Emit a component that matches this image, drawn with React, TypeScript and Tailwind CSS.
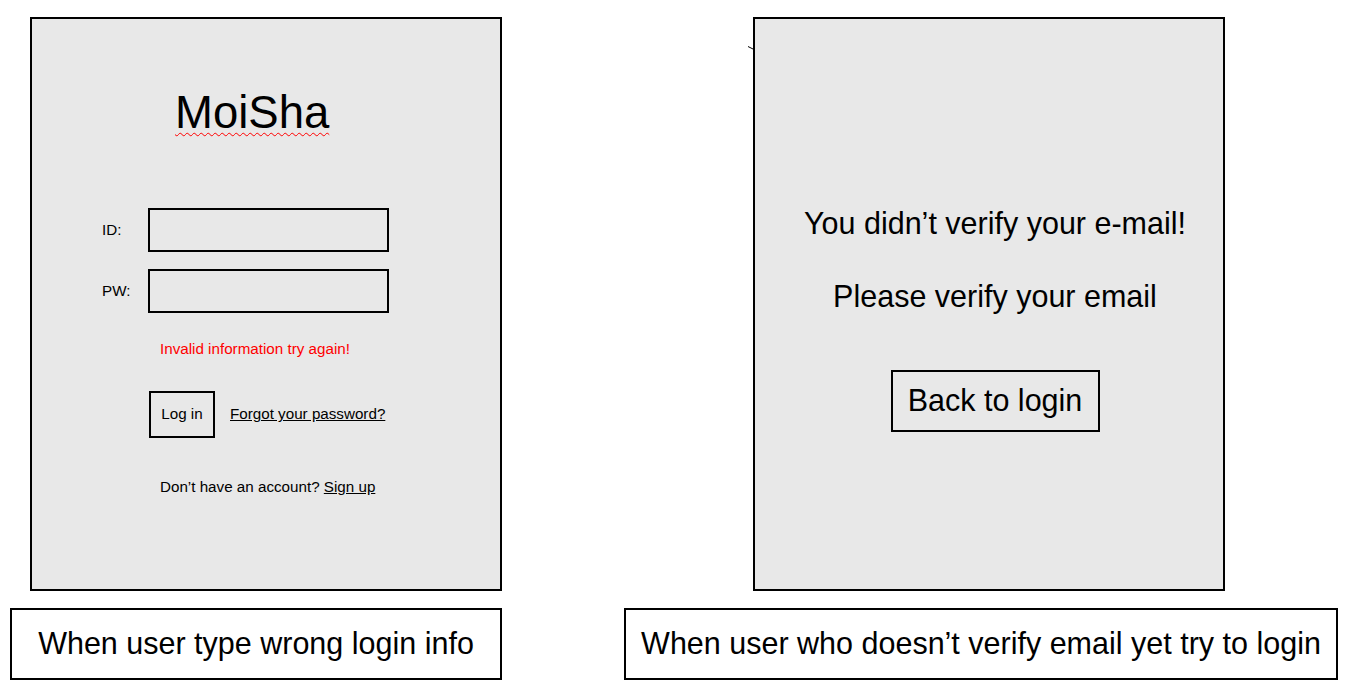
export default function App() {
  return (
    <div className="relative flex h-[694px] w-[1347px] bg-white font-['Liberation_Sans',Arial,sans-serif] text-black">
      {/* Left: wrong login info */}
      <div className="flex flex-col pl-[10px] pt-[17px]">
        <div className="ml-[20px] flex h-[574px] w-[472px] flex-col border-2 border-black bg-[#e8e8e8]">
          <div className="ml-[143px] mt-[71px] text-[45.5px] leading-[45px] underline decoration-[#ff0000] decoration-wavy decoration-1 underline-offset-[4px]">
            MoiSha
          </div>

          <div className="ml-[70px] mt-[73px] flex items-center">
            <span className="w-[46px] text-[15.2px]">ID:</span>
            <div className="h-[44px] w-[241px] border-2 border-black" />
          </div>
          <div className="ml-[70px] mt-[17px] flex items-center">
            <span className="w-[46px] text-[15.2px]">PW:</span>
            <div className="h-[44px] w-[241px] border-2 border-black" />
          </div>

          <div className="ml-[128px] mt-[27px] text-[15.2px] leading-[18px] text-[#ff0000]">
            Invalid information try again!
          </div>

          <div className="ml-[117px] mt-[33px] flex items-center gap-[15px]">
            <div className="flex h-[47px] w-[66px] items-center justify-center border-2 border-black text-[15.2px]">
              Log in
            </div>
            <span className="text-[15.2px] underline">Forgot your password?</span>
          </div>

          <div className="ml-[128px] mt-[40px] text-[15.2px] leading-[18px]">
            Don’t have an account? <span className="underline">Sign up</span>
          </div>
        </div>
        <div className="mt-[17px] flex h-[72px] w-[492px] items-center justify-center border-2 border-black text-[30.5px]">
          When user type wrong login info
        </div>
      </div>

      {/* Right: email not verified */}
      <div className="ml-[122px] flex flex-col pt-[17px]">
        <div className="relative ml-[129px] flex h-[574px] w-[472px] flex-col items-center border-2 border-black bg-[#e8e8e8] pl-3">
          <svg className="absolute left-[-7px] top-[27px]" width="6" height="4" viewBox="0 0 6 4">
            <path d="M0 0.5 L5 3" stroke="#000" strokeWidth="1" fill="none" />
          </svg>
          <div className="mt-[189px] text-[30.5px] leading-[30px]">You didn’t verify your e-mail!</div>
          <div className="mt-[43px] text-[30.5px] leading-[30px]">Please verify your email</div>
          <div className="mt-[59px] flex h-[62px] w-[209px] items-center justify-center border-2 border-black text-[30.5px]">
            Back to login
          </div>
        </div>
        <div className="mt-[17px] flex h-[72px] w-[714px] items-center justify-center border-2 border-black text-[30.5px]">
          When user who doesn’t verify email yet try to login
        </div>
      </div>
    </div>
  );
}
